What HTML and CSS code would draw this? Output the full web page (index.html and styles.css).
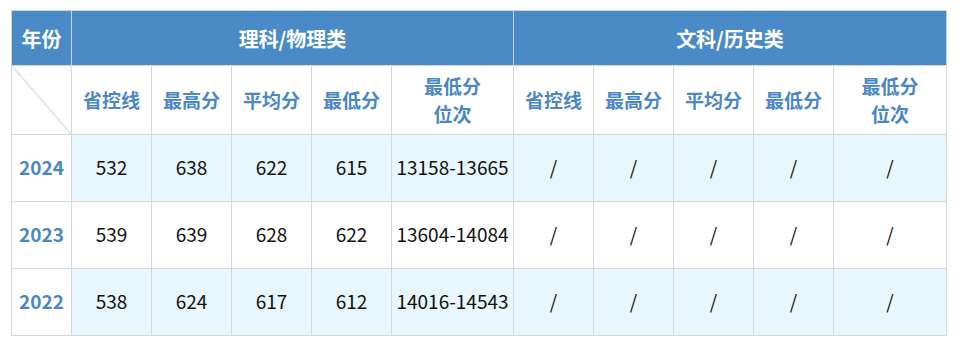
FILE: index.html
```html
<!DOCTYPE html>
<html lang="zh-CN">
<head>
    <meta charset="UTF-8">
    <title>历年录取分数</title>
    <link rel="stylesheet" href="styles.css">
</head>
<body>
    <table class="score-table">
        <colgroup>
            <col class="c-year">
            <col class="c-num"><col class="c-num"><col class="c-num"><col class="c-num"><col class="c-rank">
            <col class="c-num"><col class="c-num"><col class="c-num"><col class="c-num"><col class="c-rank2">
        </colgroup>
        <thead>
            <tr class="head-main">
                <th>年份</th>
                <th colspan="5">理科/物理类</th>
                <th colspan="5">文科/历史类</th>
            </tr>
            <tr class="head-sub">
                <th class="diag"></th>
                <th>省控线</th>
                <th>最高分</th>
                <th>平均分</th>
                <th>最低分</th>
                <th>最低分<br>位次</th>
                <th>省控线</th>
                <th>最高分</th>
                <th>平均分</th>
                <th>最低分</th>
                <th>最低分<br>位次</th>
            </tr>
        </thead>
        <tbody>
            <tr class="alt">
                <th>2024</th>
                <td>532</td><td>638</td><td>622</td><td>615</td><td>13158-13665</td>
                <td>/</td><td>/</td><td>/</td><td>/</td><td>/</td>
            </tr>
            <tr>
                <th>2023</th>
                <td>539</td><td>639</td><td>628</td><td>622</td><td>13604-14084</td>
                <td>/</td><td>/</td><td>/</td><td>/</td><td>/</td>
            </tr>
            <tr class="alt">
                <th>2022</th>
                <td>538</td><td>624</td><td>617</td><td>612</td><td>14016-14543</td>
                <td>/</td><td>/</td><td>/</td><td>/</td><td>/</td>
            </tr>
        </tbody>
    </table>
</body>
</html>
```

FILE: styles.css
```css
* {
    margin: 0;
    padding: 0;
    box-sizing: border-box;
}

body {
    background: #fff;
    padding: 10px 0 0 11px;
    font-family: "Noto Sans CJK SC", "Noto Sans", sans-serif;
}

.score-table {
    border-collapse: collapse;
    table-layout: fixed;
    width: 935px;
    font-size: 19px;
    color: #111;
}

.c-year { width: 60px; }
.c-num { width: 80px; }
.c-rank { width: 122px; }
.c-rank2 { width: 113px; }

.score-table th,
.score-table td {
    border: 1px solid #d3d8de;
    text-align: center;
    vertical-align: middle;
    font-weight: normal;
    padding: 0;
}

.score-table .head-main th {
    height: 55px;
    background: #4a8bc7;
    color: #fff;
    font-weight: bold;
    font-size: 20px;
    border-color: #c8d6e4;
    border-bottom-color: #d3d8de;
}

.score-table .head-sub th {
    height: 69px;
    color: #4a87c4;
    font-weight: bold;
    line-height: 28px;
    background: #fff;
}

.score-table .head-sub .diag {
    background: linear-gradient(to top right, #fff calc(50% - 1px), #c9cdd3 50%, #fff calc(50% + 1px));
}

.score-table tbody tr {
    height: 67px;
}

.score-table tbody th,
.score-table tbody td {
    padding-bottom: 3px;
}

.score-table tbody tr.alt {
    background: #e8f6fd;
}

.score-table tbody th {
    background: #fff;
    color: #4a87c4;
    font-weight: bold;
}
```
